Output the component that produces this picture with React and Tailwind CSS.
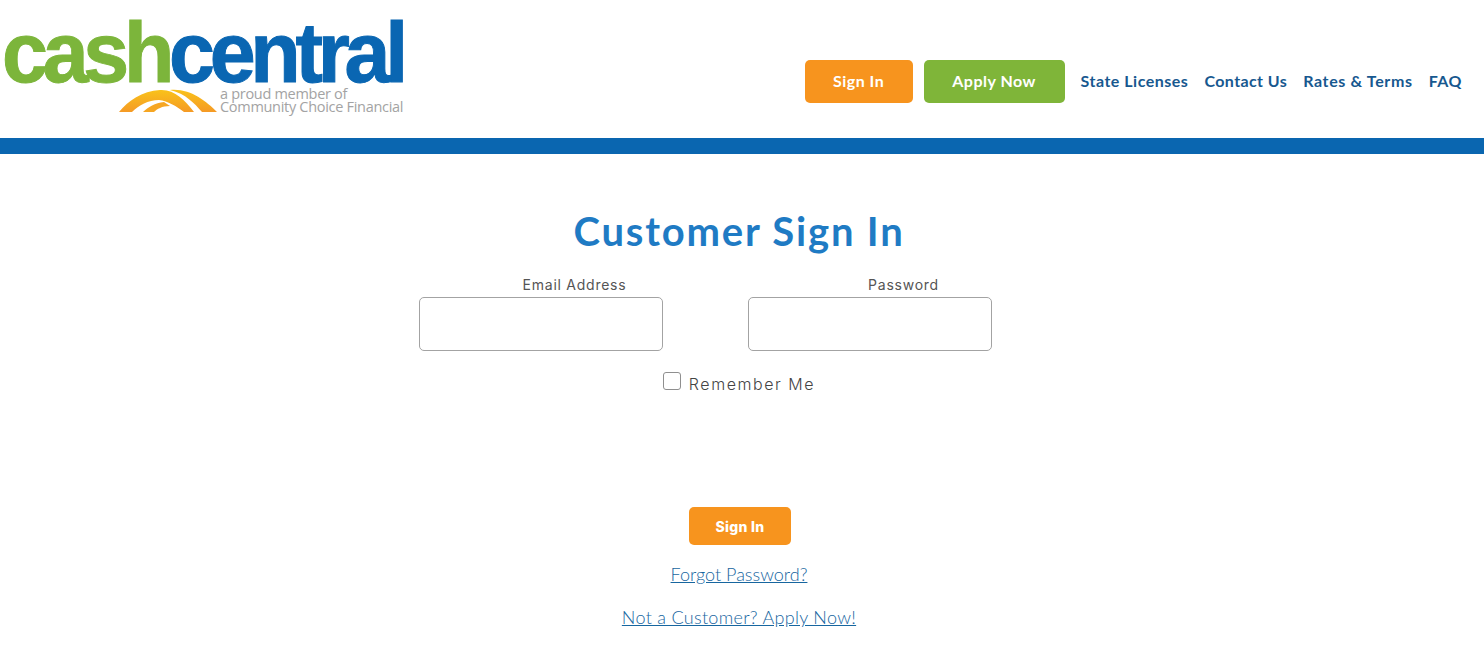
const futura = "font-['Lato','Open_Sans',sans-serif]"

function Logo() {
  return (
    <div className="ml-[4px] mt-[17px] w-[400px] shrink-0 self-start">
      <div className="-ml-[2px] h-[70px] origin-left scale-x-[0.96] whitespace-nowrap font-['Liberation_Sans',sans-serif] text-[86px] font-bold leading-[70px] tracking-[-5.5px] [-webkit-text-stroke-width:1px]">
        <span className="text-[#7cb53b]">cash</span>
        <span className="text-[#0a66b2]">central</span>
      </div>
      <div className="flex h-[30px] items-start">
        <svg width="100" height="26" viewBox="0 0 100 26" className="ml-[114px] mt-[1px] shrink-0">
          <defs>
            <linearGradient id="arch" x1="0" y1="0" x2="0" y2="1">
              <stop offset="0" stopColor="#f9c21a" />
              <stop offset="1" stopColor="#f59a25" />
            </linearGradient>
          </defs>
          <path d="M1 24C10 13 24 3 42 2C56 1 67 12 76 24H66C58 18 50 13 41 12C30 12 21 17 14 24Z" fill="url(#arch)" />
          <path d="M52 2C72 0 88 13 99 24H84C76 15 68 6 52 2Z" fill="url(#arch)" />
          <path d="M25 24C30 19 37 15 46 14L52 18C44 18 39 21 36 24Z" fill="#f6a623" />
        </svg>
        <div className="ml-[2px] whitespace-nowrap font-['Open_Sans',sans-serif] text-[14.5px] leading-[13px] tracking-[-0.3px] text-[#a3a3a3]">
          <div>a proud member of</div>
          <div>Community Choice Financial</div>
        </div>
      </div>
    </div>
  )
}

function Header() {
  return (
    <header>
      <div className="flex h-[138px] justify-between">
        <Logo />
        <nav className={`mr-[22px] mt-[60px] flex h-[43px] items-center ${futura} text-[16px] font-bold tracking-[0.5px]`}>
          <a className="flex h-[43px] w-[108px] items-center justify-center rounded-[5px] bg-[#f7941e] pb-[2px] text-white">Sign In</a>
          <a className="ml-[11px] flex h-[43px] w-[141px] items-center justify-center rounded-[5px] bg-[#7fb539] pb-[2px] text-white">Apply Now</a>
          <a className="ml-[16px] pb-[2px] text-[#17588f]">State Licenses</a>
          <a className="ml-[16px] pb-[2px] tracking-[0.4px] text-[#17588f]">Contact Us</a>
          <a className="ml-[16px] pb-[2px] tracking-[0.65px] text-[#17588f]">Rates &amp; Terms</a>
          <a className="ml-[16px] pb-[2px] text-[#17588f]">FAQ</a>
        </nav>
      </div>
      <div className="h-[16px] bg-[#0a66b0]" />
    </header>
  )
}

function Field({ label, type }) {
  return (
    <div className="w-[312px]">
      <label className="mb-[2px] block text-center font-['Inter',sans-serif] text-[14px] leading-[20px] tracking-[0.75px] text-[#555555]">{label}</label>
      <input
        type={type}
        className="block h-[54px] w-[244px] rounded-[5px] border border-[#a3a3a3] bg-white"
      />
    </div>
  )
}

function SignInForm() {
  return (
    <main className="flex flex-col items-center pr-[6px]">
      <h1 className={`mt-[49px] ${futura} text-[40px] font-bold leading-[56px] tracking-[1.8px] text-[#1f7bc4]`}>
        Customer Sign In
      </h1>
      <div className="mt-[16px] flex gap-[17px]">
        <Field label="Email Address" type="email" />
        <Field label="Password" type="password" />
      </div>
      <label className="mt-[18px] flex h-[24px] items-center gap-[8px]">
        <span className="h-[18px] w-[18px] rounded-[3px] border border-[#8f8f8f] bg-white" />
        <span className="pt-[6px] font-['Inter',sans-serif] text-[16px] font-light tracking-[1.55px] text-[#444444]">Remember Me</span>
      </label>
      <button className="ml-[2px] mt-[114px] h-[38px] w-[102px] rounded-[5px] bg-[#f7941e] font-['Inter',sans-serif] text-[14px] font-extrabold tracking-[0.3px] text-white">
        Sign In
      </button>
      <a className={`mt-[17px] ${futura} text-[18px] font-light leading-[24px] text-[#17669f] underline`}>Forgot Password?</a>
      <a className={`mt-[19px] ${futura} text-[18px] font-light leading-[24px] tracking-[0.3px] text-[#17669f] underline`}>Not a Customer? Apply Now!</a>
    </main>
  )
}

export default function App() {
  return (
    <div className="h-[655px] overflow-hidden bg-white">
      <Header />
      <SignInForm />
    </div>
  )
}
